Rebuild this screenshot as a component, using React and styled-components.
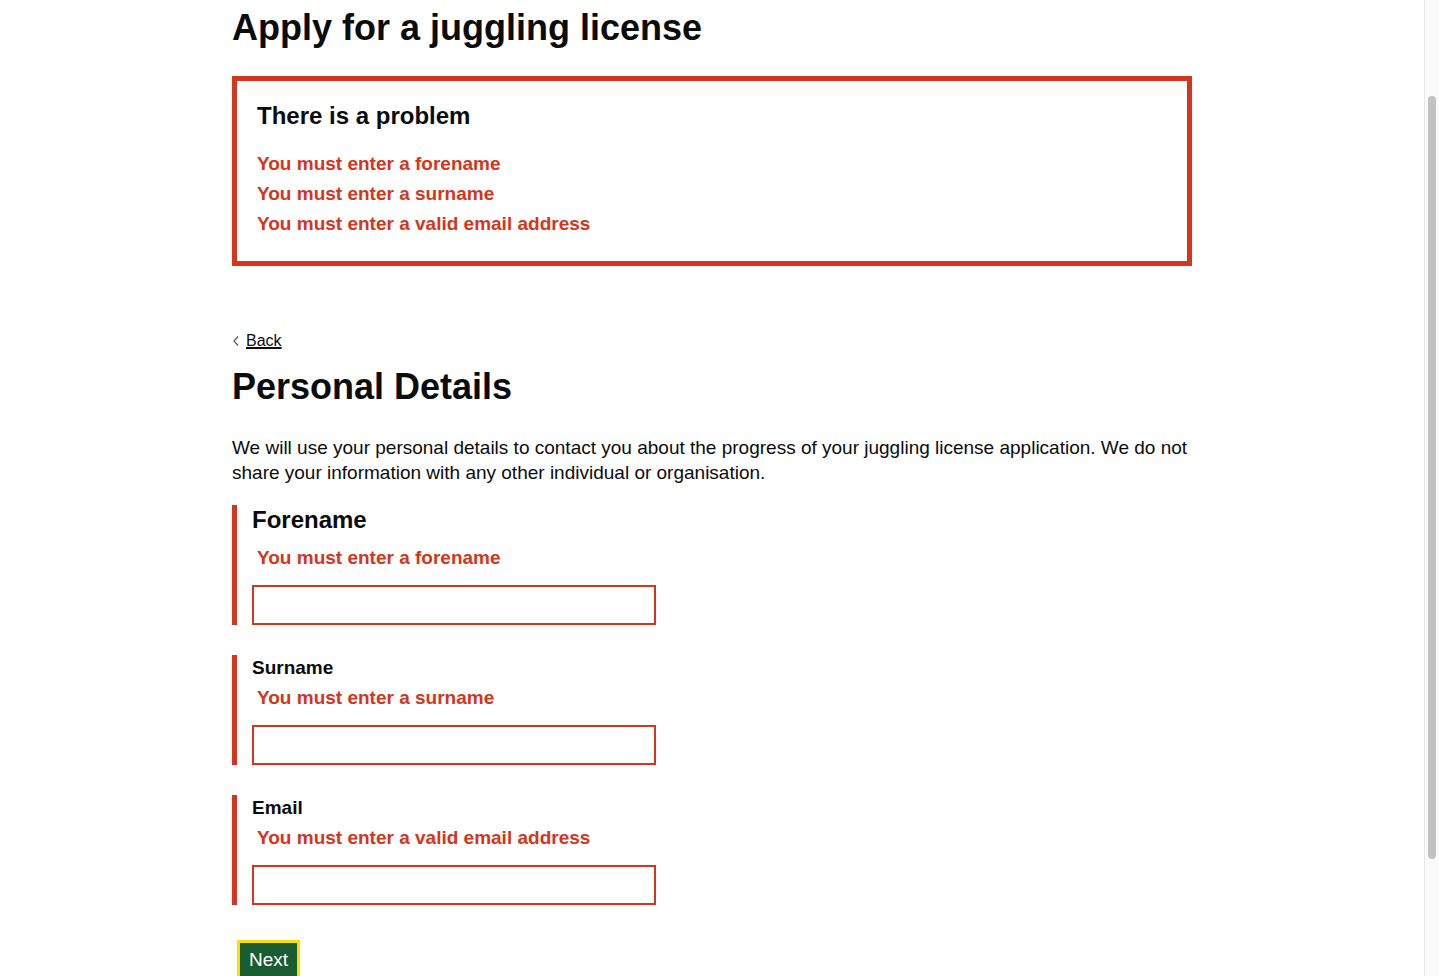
import React from "react";
import styled, { createGlobalStyle } from "styled-components";

const GlobalStyle = createGlobalStyle`
  html, body {
    margin: 0;
    padding: 0;
    background: #ffffff;
    overflow: hidden;
  }
  body {
    font-family: "Liberation Sans", Arial, sans-serif;
    color: #0b0c0c;
  }
`;

const errors = [
  { id: "forename", text: "You must enter a forename" },
  { id: "surname", text: "You must enter a surname" },
  { id: "email", text: "You must enter a valid email address" },
];

const fields = [
  { id: "forename", label: "Forename", large: true, error: errors[0].text },
  { id: "surname", label: "Surname", error: errors[1].text },
  { id: "email", label: "Email", error: errors[2].text },
];

const App = () => {
  return (
    <>
      <GlobalStyle />
      <Viewport>
        <Page>
          <Container>
            <Title>Apply for a juggling license</Title>
            <ErrorSummary role="alert">
              <SummaryTitle>There is a problem</SummaryTitle>
              <SummaryList>
                {errors.map((e) => (
                  <li key={e.id}>
                    <SummaryLink href={`#${e.id}`}>{e.text}</SummaryLink>
                  </li>
                ))}
              </SummaryList>
            </ErrorSummary>

            <BackLink href="#">
              <Chevron width="8" height="12" viewBox="0 0 8 12">
                <path d="M6 1.5 L2 6 L6 10.5" fill="none" stroke="#505a5f" strokeWidth="1.2" />
              </Chevron>
              <span>Back</span>
            </BackLink>

            <Title $section>Personal Details</Title>
            <Intro>
              We will use your personal details to contact you about the progress of your juggling
              license application. We do not share your information with any other individual or
              organisation.
            </Intro>

            <form onSubmit={(e) => e.preventDefault()}>
              {fields.map((f) => (
                <FormGroup key={f.id}>
                  <Label htmlFor={f.id} $large={f.large}>
                    {f.label}
                  </Label>
                  <ErrorMessage>{f.error}</ErrorMessage>
                  <Input id={f.id} type={f.id === "email" ? "email" : "text"} />
                </FormGroup>
              ))}
              <Button type="submit">Next</Button>
            </form>
          </Container>
        </Page>
        <ScrollTrack>
          <ScrollThumb />
        </ScrollTrack>
      </Viewport>
    </>
  );
};

const Viewport = styled.div`
  display: flex;
  width: 100vw;
  height: 100vh;
  overflow: hidden;
`;

const Page = styled.main`
  flex: 1;
  overflow: hidden;
`;

const Container = styled.div`
  width: 960px;
  margin: 0 auto;
  padding-top: 8px;
`;

const Title = styled.h1`
  margin: ${(p) => (p.$section ? "16px 0 28px" : "0 0 28px")};
  font-size: 36px;
  line-height: 40px;
  font-weight: 700;
`;

const ErrorSummary = styled.div`
  border: 5px solid #d4351c;
  padding: 20px 20px 22px;
`;

const SummaryTitle = styled.h2`
  margin: 0 0 18px;
  font-size: 24px;
  line-height: 30px;
  font-weight: 700;
`;

const SummaryList = styled.ul`
  list-style: none;
  margin: 0;
  padding: 0;
`;

const SummaryLink = styled.a`
  display: block;
  color: #d4351c;
  font-size: 19px;
  line-height: 30px;
  font-weight: 700;
  text-decoration: none;
`;

const BackLink = styled.a`
  display: inline-flex;
  align-items: center;
  gap: 6px;
  margin-top: 65px;
  color: #0b0c0c;
  font-size: 16px;
  line-height: 20px;

  span {
    text-decoration: underline;
    text-underline-offset: 2px;
  }
`;

const Chevron = styled.svg`
  display: block;
`;

const Intro = styled.p`
  margin: 0 0 20px;
  font-size: 19px;
  line-height: 25px;
`;

const FormGroup = styled.div`
  border-left: 5px solid #d4351c;
  padding-left: 15px;
  margin-bottom: 30px;
`;

const Label = styled.label`
  display: block;
  font-weight: 700;
  font-size: ${(p) => (p.$large ? "24px" : "19px")};
  line-height: ${(p) => (p.$large ? "30px" : "25px")};
  margin-bottom: ${(p) => (p.$large ? "10px" : "5px")};
`;

const ErrorMessage = styled.p`
  margin: 0 0 15px;
  padding-left: 5px;
  color: #d4351c;
  font-size: 19px;
  line-height: 25px;
  font-weight: 700;
`;

const Input = styled.input`
  display: block;
  box-sizing: border-box;
  width: 404px;
  height: 40px;
  margin: 0;
  padding: 5px;
  border: 2px solid #d4351c;
  border-radius: 0;
  font: inherit;
  font-size: 19px;
  outline: none;
`;

const Button = styled.button`
  margin: 5px 0 0 5px;
  padding: 4px 9px 6px;
  background: #1a5c31;
  color: #ffffff;
  border: 3px solid #ffdd00;
  border-radius: 0;
  font-family: "Liberation Sans", Arial, sans-serif;
  font-size: 19px;
  line-height: 25px;
  cursor: pointer;
`;

const ScrollTrack = styled.div`
  box-sizing: border-box;
  width: 15px;
  flex: none;
  background: #fafafa;
  border-left: 1px solid #e8e8e8;
  padding: 96px 3px 0 3px;
`;

const ScrollThumb = styled.div`
  height: 763px;
  border-radius: 4px;
  background: #c2c2c2;
`;

export default App;
